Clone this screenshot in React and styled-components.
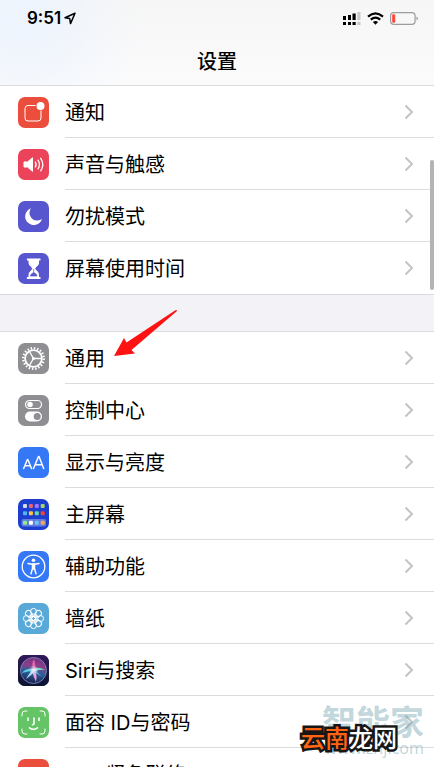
import React from "react";
import styled, { createGlobalStyle } from "styled-components";

const GlobalStyle = createGlobalStyle`
  * {
    box-sizing: border-box;
  }

  body {
    margin: 0;
    background: #ffffff;
    font-family: Inter, "Noto Sans CJK SC", sans-serif;
    color: #000000;
  }
`;

const Screen = styled.div`
  position: relative;
  display: flex;
  flex-direction: column;
  height: 100vh;
  overflow: hidden;
`;

const Header = styled.header`
  flex: none;
  border-bottom: 1px solid #dcdcdc;
  background: radial-gradient(circle at 24px 20px, #edf4fe 0, rgba(237, 244, 254, 0) 120px),
    linear-gradient(#f6f6f6, #fbfbfc);
`;

const StatusBar = styled.div`
  display: flex;
  align-items: center;
  justify-content: space-between;
  height: 36px;
  padding: 0 15px 0 27px;
`;

const StatusGroup = styled.div`
  display: flex;
  align-items: center;
  gap: ${(props) => props.$gap}px;
  font-size: 17px;
  font-weight: 600;
`;

const Title = styled.h1`
  margin: 0;
  height: 49px;
  font-size: 20px;
  font-weight: 500;
  line-height: 52px;
  text-align: center;
`;

const Content = styled.main`
  flex: 1;
  min-height: 0;
  overflow: hidden;
  background: #f2f2f7;
`;

const Group = styled.ul`
  margin: 0;
  padding: 0;
  border-bottom: 1px solid #dcdce0;
  background: #ffffff;
  list-style: none;

  & + & {
    margin-top: 36px;
    border-top: 1px solid #dcdce0;
  }
`;

const Row = styled.button`
  display: flex;
  align-items: center;
  width: 100%;
  height: 52px;
  padding: 0 0 0 18px;
  border: 0;
  background: none;
  color: inherit;
  font: inherit;
  text-align: left;
  cursor: pointer;
`;

const RowIcon = styled.span`
  flex: none;
  width: 31px;
  height: 31px;
  margin-right: 16px;
  border-radius: 7px;
  overflow: hidden;
  background: ${(props) => props.$color};

  svg {
    display: block;
  }
`;

const RowBody = styled.span`
  display: flex;
  flex: 1;
  align-items: center;
  justify-content: space-between;
  height: 100%;
  padding-right: 20px;
  border-bottom: 1px solid ${(props) => (props.$last ? "transparent" : "#dcdcde")};
  font-size: 20px;
`;

const ScrollThumb = styled.div`
  position: absolute;
  top: 160px;
  right: 0;
  width: 4px;
  height: 130px;
  border-radius: 2px;
  background: #b4b4b4;
`;

const Pointer = styled.svg`
  position: absolute;
  top: 308px;
  left: 112px;
`;

const SiteMark = styled.div`
  position: absolute;
  right: 10px;
  bottom: 10px;
  color: rgba(116, 166, 176, 0.45);
  font-family: "Noto Sans", "Noto Sans CJK SC", sans-serif;
  text-align: right;

  strong {
    display: block;
    font-size: 34px;
    line-height: 34px;
  }

  span {
    display: block;
    font-size: 16px;
    line-height: 18px;
  }
`;

const NetMark = styled.div`
  position: absolute;
  right: 37px;
  bottom: 10px;
  color: #ffffff;
  font-size: 24px;
  font-weight: 500;
  line-height: 36px;
  -webkit-text-stroke: 5px #161616;
  paint-order: stroke fill;

  em {
    color: #ff6412;
    font-style: normal;
  }
`;

const Svg = ({ children }) => (
  <svg width="31" height="31" viewBox="0 0 31 31" fill="none" stroke="#fff" aria-hidden="true">
    {children}
  </svg>
);

const NotificationIcon = () => (
  <Svg>
    <path d="M17.5 8.5H10a3 3 0 0 0-3 3V21a3 3 0 0 0 3 3h10a3 3 0 0 0 3-3v-7.5" />
    <circle cx="22.5" cy="9" r="4" fill="#fff" stroke="none" />
  </Svg>
);

const SoundIcon = () => (
  <Svg>
    <path d="M6 13h3.5l5-4.2v13.5l-5-4.3H6z" fill="#fff" strokeLinejoin="round" />
    <path d="M17.3 13q1.7 2.5 0 5M20 11.2q3 4.3 0 8.6M22.7 9.3q4.2 6.2 0 12.5" strokeWidth="1.3" strokeLinecap="round" />
  </Svg>
);

const MoonIcon = () => (
  <Svg>
    <path d="M13 7.3a8.6 8.6 0 1 0 11 10.7q-2 1.6-5 1.4a7.6 7.6 0 0 1-6-12.1z" fill="#fff" stroke="none" />
  </Svg>
);

const HourglassIcon = () => (
  <Svg>
    <path d="M9.7 6.5h12M9.7 25h12" strokeWidth="2" strokeLinecap="round" />
    <path d="M11 7v3c0 3 3.6 3.8 3.6 5.6S11 18.500 11 21.5V25h9.5v-3.5c0-3-3.6-4.1-3.6-5.9s3.6-2.6 3.6-5.6V7z" fill="#fff" />
    <path d="M15.7 16v3.5M12.5 23c.2-2 1.5-2.5 3.2-3.5 1.7 1 3 1.5 3.3 3.5z" fill="#5856ce" stroke="#5856ce" strokeWidth=".7" />
  </Svg>
);

const GearIcon = () => (
  <Svg>
    <circle cx="15.5" cy="15.5" r="10.3" strokeWidth="2.4" strokeDasharray="1.5 1.736" />
    <circle cx="15.5" cy="15.5" r="8.4" strokeWidth="1.8" />
    <path d="M15.5 15.5H24M15.5 15.5l-4.2-7.3M15.5 15.5l-4.2 7.3" strokeWidth="1.3" />
    <circle cx="15.5" cy="15.5" r="1.5" fill="#fff" stroke="none" />
  </Svg>
);

const ControlIcon = () => (
  <Svg>
    <rect x="7.5" y="5.5" width="16" height="8" rx="4" strokeWidth="1.2" />
    <circle cx="12" cy="9.5" r="2.8" fill="#fff" stroke="none" />
    <rect x="7" y="16.5" width="17" height="10" rx="5" fill="#fff" stroke="none" />
    <circle cx="19.2" cy="21.5" r="3.5" fill="#8e8e93" stroke="none" />
  </Svg>
);

const DisplayIcon = () => (
  <Svg>
    <path
      d="m5.7 21.5 3.7-9h.4l3.7 9M7 18.7h5.3M15.5 21.5l5-12h.5l4.7 12M17.2 17.8h7"
      strokeWidth="1.5"
      strokeLinecap="round"
      strokeLinejoin="round"
    />
  </Svg>
);

const appColors = [
  ["#d5dbe2", "#f06070", "#a773ff", "#a8d663"],
  ["#51b4f4", "#ffc43a", "#67d9a5", "#f04638"],
  ["#8cec89", "#ffffff", "#69c5f8", "#ffa64a"],
];

const HomeIcon = () => (
  <Svg>
    <rect x="3.5" y="20" width="24.5" height="7.5" rx="2" fill="#647bdf" stroke="none" />
    {appColors.map((line, y) =>
      line.map((color, x) => (
        <rect key={color} x={5 + x * 5.9} y={[5, 12.3, 21.8][y]} width="4" height="4" rx="1" fill={color} stroke="none" />
      ))
    )}
  </Svg>
);

const AccessibilityIcon = () => (
  <Svg>
    <circle cx="15.5" cy="15.5" r="11.3" strokeWidth="1.3" />
    <circle cx="15.5" cy="9.3" r="1.8" fill="#fff" stroke="none" />
    <path d="M10 12.5q5.5 1.3 11 0" strokeWidth="1.5" strokeLinecap="round" />
    <path d="M14.5 13h2v4.5l1.5 5.2M14.5 13v4.5L13 22.7M15.5 13v5" strokeWidth="1.5" strokeLinecap="round" />
  </Svg>
);

const WallpaperIcon = () => (
  <Svg>
    {[0, 45, 90, 135, 180, 225, 270, 315].map((angle) => (
      <g key={angle} transform={`rotate(${angle} 15.5 15.5)`}>
        <circle cx="15.5" cy="8.3" r="2.9" />
        <path d="m14 10.9 1.5 3.1 1.5-3.1" />
      </g>
    ))}
    <circle cx="15.5" cy="15.5" r="2.3" />
  </Svg>
);

const SiriIcon = () => (
  <Svg>
    <defs>
      <linearGradient id="siri-back" x1="0" y1="0" x2="0" y2="1">
        <stop offset="0" stopColor="#32195b" />
        <stop offset="1" stopColor="#0a1530" />
      </linearGradient>
      <linearGradient id="siri-orb" x1=".7" y1="0" x2=".5" y2="1">
        <stop offset="0" stopColor="#74307f" />
        <stop offset=".35" stopColor="#8b3f8b" />
        <stop offset=".6" stopColor="#2a5f97" />
        <stop offset="1" stopColor="#182050" />
      </linearGradient>
      <radialGradient id="siri-glow">
        <stop offset="0" stopColor="#fff" />
        <stop offset="1" stopColor="#bdf3ff" stopOpacity="0" />
      </radialGradient>
    </defs>
    <rect width="31" height="31" fill="url(#siri-back)" stroke="none" />
    <circle cx="15.5" cy="15.5" r="13" fill="url(#siri-orb)" stroke="#7f87b5" strokeWidth=".9" />
    <g stroke="none">
      <path d="M15 14Q8 13 4 18q6-2 12-2z" fill="#59cde0" />
      <path d="M15 14q5-3 12 1-6-1-11 2z" fill="#75dfc6" />
      <path d="M15 14q-5 6-7 10 6-4 9-8z" fill="#a5dcf5" />
      <path d="M15 13q5 6 3 14-3-6-4-12z" fill="#f29cd5" />
      <path d="M15 15q-2-6 1-11 2 5 1 11z" fill="#e265a4" />
      <path d="m16 14 8 8-9-6z" fill="#73aaf3" />
      <circle cx="15.8" cy="15" r="5" fill="url(#siri-glow)" />
    </g>
  </Svg>
);

const FaceIcon = () => (
  <Svg>
    <path d="M4 9V7q0-3 3-3h2M22 4h2q3 0 3 3v2M27 22v2q0 3-3 3h-2M9 27H7q-3 0-3-3v-2" strokeLinecap="round" />
    <path d="M10 11v2.5M21 11v2.5M16 11v5.5q0 1.2-1.5 1.2M11.5 20.8q4 3 8 0" strokeWidth="1.6" strokeLinecap="round" />
  </Svg>
);

const groups = [
  [
    { label: "通知", color: "#eb4e3d", icon: <NotificationIcon /> },
    { label: "声音与触感", color: "#eb445a", icon: <SoundIcon /> },
    { label: "勿扰模式", color: "#5856ce", icon: <MoonIcon /> },
    { label: "屏幕使用时间", color: "#5856ce", icon: <HourglassIcon /> },
  ],
  [
    { label: "通用", color: "#8e8e93", icon: <GearIcon /> },
    { label: "控制中心", color: "#8e8e93", icon: <ControlIcon /> },
    { label: "显示与亮度", color: "#3478f6", icon: <DisplayIcon /> },
    { label: "主屏幕", color: "#1c3fd0", icon: <HomeIcon /> },
    { label: "辅助功能", color: "#3478f6", icon: <AccessibilityIcon /> },
    { label: "墙纸", color: "#58a8d8", icon: <WallpaperIcon /> },
    { label: "Siri与搜索", color: "#20163f", icon: <SiriIcon /> },
    { label: "面容 ID与密码", color: "#65c466", icon: <FaceIcon /> },
    { label: "SOS紧急联络", color: "#eb4e3d", icon: null },
  ],
];

const Chevron = () => (
  <svg width="10" height="16" viewBox="0 0 10 16" fill="none" stroke="#c4c4c7" strokeWidth="2" aria-hidden="true">
    <path d="M1.5 1.5 8 8l-6.5 6.5" />
  </svg>
);

export default function App() {
  return (
    <Screen>
      <GlobalStyle />
      <Header>
        <StatusBar>
          <StatusGroup $gap={3}>
            <span>9:51</span>
            <svg width="12" height="13" viewBox="0 0 12 13" fill="none" stroke="#000" strokeWidth="1.5" strokeLinejoin="round" aria-hidden="true">
              <path d="M11 1.3 1 5.8l4.7.8.8 5z" />
            </svg>
          </StatusGroup>
          <StatusGroup $gap={6}>
            <svg width="18" height="15" viewBox="0 0 18 15" aria-hidden="true">
              <path d="M0 5h3v4H0zM5 4h3v5H5zM9.5 2.5h3.2V9H9.5zM0 11h3v3H0zM5 11h3v3H5zM9.5 11h3.2v3H9.5z" />
              <path d="M14.3 1h3.2v8h-3.2zM14.3 11h3.2v3h-3.2z" fill="#c9c9c9" />
            </svg>
            <svg width="17" height="13" viewBox="0 0 17 13" fill="none" stroke="#000" strokeWidth="2.2" aria-hidden="true">
              <path d="M1 4.6q7.5-6.6 15 0M3.8 7.7q4.7-4 9.4 0" />
              <path d="m8.5 12.8-2.6-2.7q2.6-2 5.2 0z" fill="#000" stroke="none" />
            </svg>
            <svg width="29" height="13" viewBox="0 0 29 13" fill="none" aria-hidden="true">
              <rect x=".6" y=".6" width="24.5" height="11.8" rx="3.3" stroke="#9c9c9c" strokeWidth="1.2" />
              <rect x="2.2" y="2.2" width="3" height="8.6" rx="1.2" fill="#ff4538" />
              <path d="M26.5 4.5q3 2 0 4z" fill="#9c9c9c" />
            </svg>
          </StatusGroup>
        </StatusBar>
        <Title>设置</Title>
      </Header>
      <Content>
        {groups.map((rows) => (
          <Group key={rows[0].label}>
            {rows.map((row, index) => (
              <li key={row.label}>
                <Row type="button">
                  <RowIcon $color={row.color}>{row.icon}</RowIcon>
                  <RowBody $last={index === rows.length - 1}>
                    {row.label}
                    <Chevron />
                  </RowBody>
                </Row>
              </li>
            ))}
          </Group>
        ))}
      </Content>
      <ScrollThumb />
      <Pointer width="68" height="50" viewBox="0 0 68 50" aria-hidden="true">
        <path d="M2 48 12 30l2.500 4.500L63 2.500q2-1 2 .5L19.500 42l3.500 3.500z" fill="#ff1212" />
      </Pointer>
      <SiteMark>
        <strong>智能家</strong>
        <span>www.znj.com</span>
      </SiteMark>
      <NetMark>
        <em>云南</em>龙网
      </NetMark>
    </Screen>
  );
}
